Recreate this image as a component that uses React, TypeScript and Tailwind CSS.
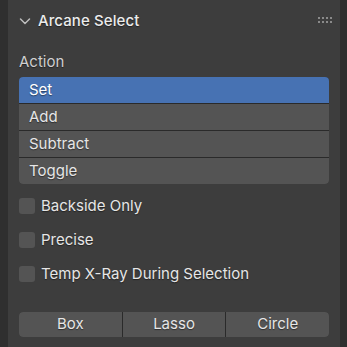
import React from 'react';

const font = { fontFamily: 'Inter, "DejaVu Sans", sans-serif' };

const actions = ['Set', 'Add', 'Subtract', 'Toggle'];
const options = ['Backside Only', 'Precise', 'Temp X-Ray During Selection'];
const modes = ['Box', 'Lasso', 'Circle'];

const Grip: React.FC = () => (
    <div className="grid grid-cols-4 gap-[2px]">
        {Array.from({ length: 8 }).map((_, i) => (
            <div key={i} className="w-[2px] h-[2px] bg-[#8a8a8a]" />
        ))}
    </div>
);

export default function App() {
    return (
        <div className="w-[347px] h-[347px] bg-[#2f2f2f] pl-[8px] pr-[7px] overflow-hidden" style={font}>
            <div className="h-full bg-[#3d3d3d] flex flex-col [text-shadow:0_1px_1px_rgba(0,0,0,0.45)]">
                <div className="h-[42px] flex items-center pl-[10px] pr-[8px]">
                    <svg width="14" height="14" viewBox="0 0 14 14" className="mr-[6px]">
                        <path d="M2.5 5 L7 9.5 L11.5 5" fill="none" stroke="#bdbdbd" strokeWidth="1.5" strokeLinecap="round" strokeLinejoin="round" />
                    </svg>
                    <span className="text-[15px] font-medium text-[#ececec] tracking-[0.1px]">Arcane Select</span>
                    <div className="ml-auto mt-[-2px]">
                        <Grip />
                    </div>
                </div>

                <div className="px-[11px] flex flex-col">
                    <div className="text-[15px] text-[#d0d0d0] h-[24px] flex items-center mt-[8px]">Action</div>
                    <div className="mt-[3px] flex flex-col gap-[1px] bg-[#2a2a2a] rounded-[4px] overflow-hidden">
                        {actions.map((a, i) => (
                            <div
                                key={a}
                                className={`h-[26px] flex items-center pl-[10px] text-[15px] ${i === 0 ? 'bg-[#4772b3] text-white' : 'bg-[#545454] text-[#e6e6e6]'}`}
                            >
                                {a}
                            </div>
                        ))}
                    </div>

                    <div className="mt-[14px] flex flex-col gap-[18px]">
                        {options.map(o => (
                            <div key={o} className="flex items-center h-[16px]">
                                <div className="w-[16px] h-[16px] rounded-[3px] bg-[#545454] mr-[6px]" />
                                <span className="text-[15px] text-[#e6e6e6]">{o}</span>
                            </div>
                        ))}
                    </div>

                    <div className="mt-[30px] flex h-[25px] rounded-[4px] overflow-hidden bg-[#2a2a2a] gap-[1px]">
                        {modes.map(m => (
                            <div key={m} className="flex-1 bg-[#545454] flex items-center justify-center text-[15px] text-[#e6e6e6]">
                                {m}
                            </div>
                        ))}
                    </div>
                </div>
            </div>
        </div>
    );
}
